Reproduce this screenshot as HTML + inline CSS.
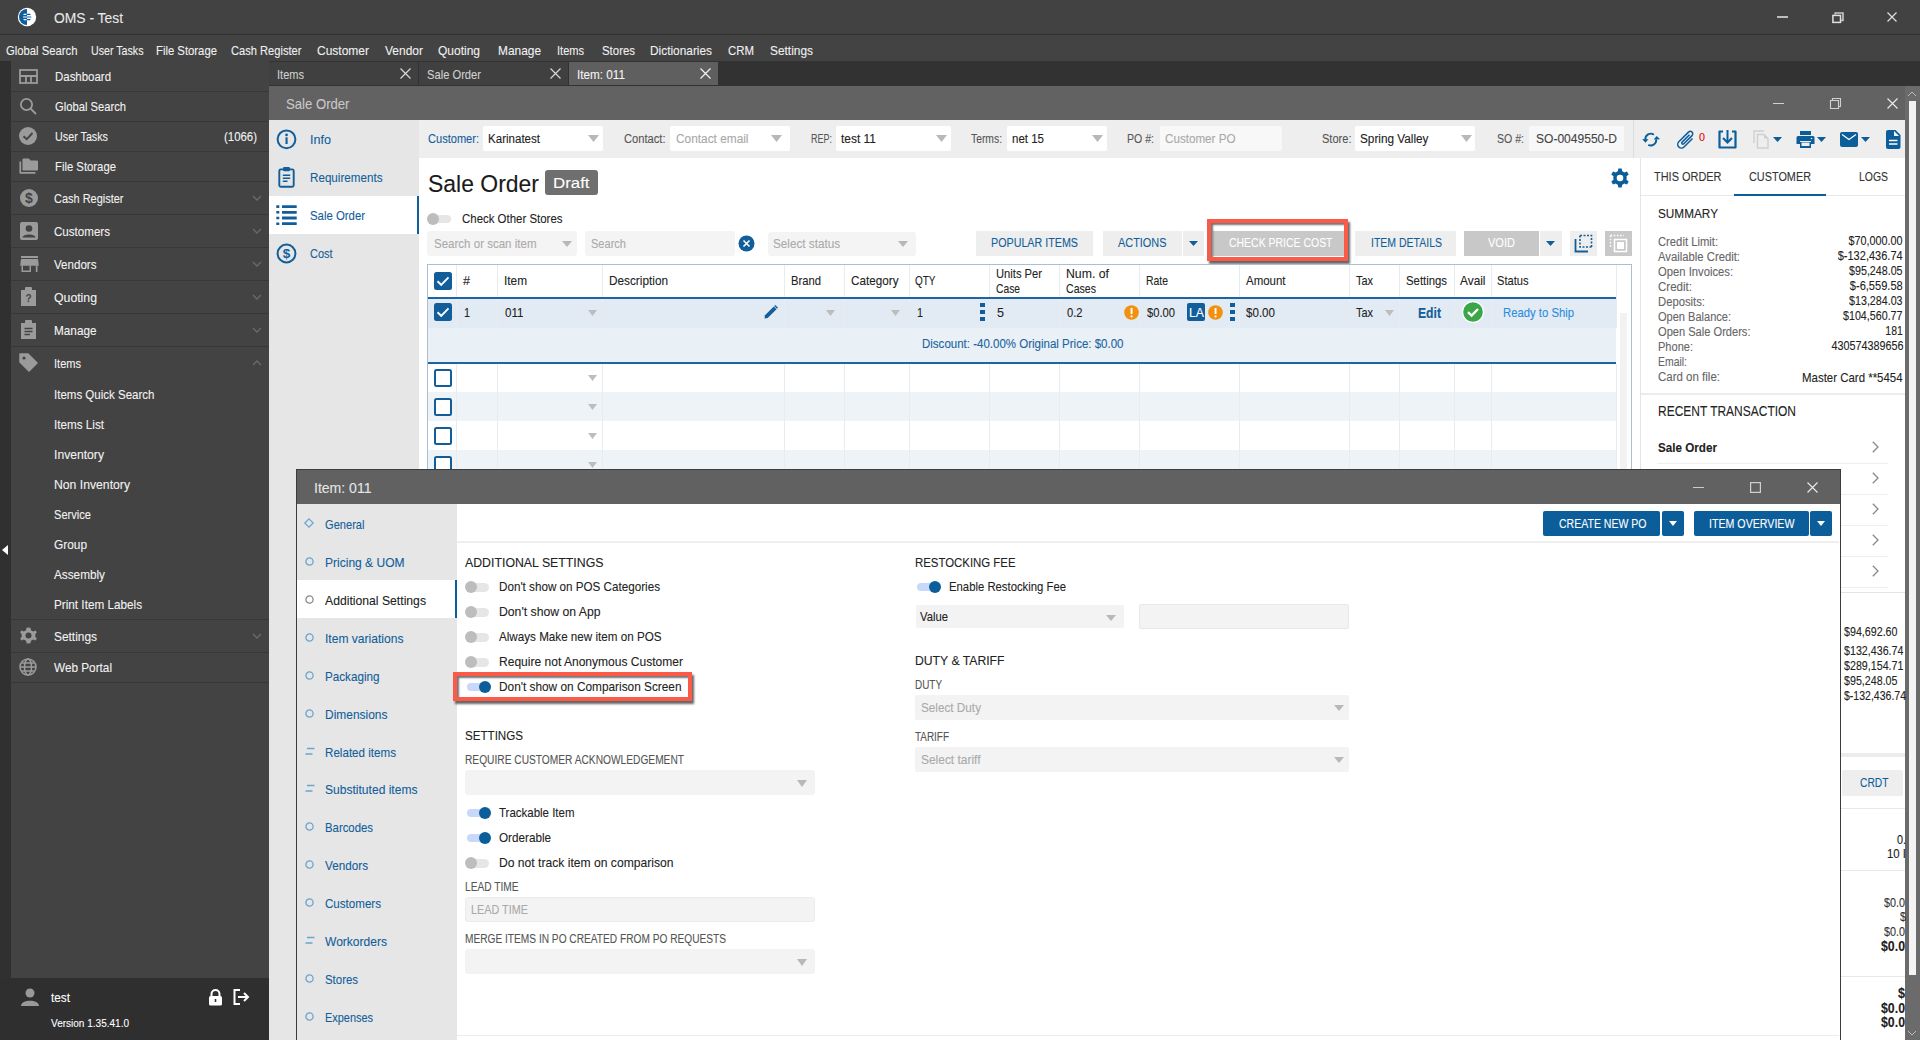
<!DOCTYPE html>
<html><head><meta charset="utf-8">
<style>
*{box-sizing:border-box;margin:0;padding:0}
html,body{width:1920px;height:1040px;overflow:hidden;background:#2f2f2f;font-family:"Liberation Sans",sans-serif;font-size:13px;color:#222}
.a{position:absolute}
.t{position:absolute;white-space:nowrap;line-height:1;-webkit-text-stroke:0.1px currentColor}
svg{position:absolute;overflow:visible}
</style></head><body>
<div class="a" style="left:0px;top:0px;width:1920px;height:34px;background:#424242;"></div>
<div class="a" style="left:0px;top:34px;width:1920px;height:1px;background:#303030;"></div>
<svg style="left:17px;top:7px" width="20" height="20"><circle cx="10" cy="10" r="9.2" fill="#fff"/><path d="M10 2A8 8 0 0 0 10 18Z" fill="#0a5f9c"/><path d="M7 7.4H10M6.5 10H10M7 12.6H10" stroke="#fff" stroke-width="1.2" stroke-linecap="round"/><path d="M10 7.4H13M10 10H13.8M10 12.6H13" stroke="#0a5f9c" stroke-width="1.2" stroke-linecap="round"/><path d="M6.5 10H13.8" stroke="#8db5d6" stroke-width="1.5" opacity="0.6"/></svg>
<div class="t" style="left:54px;top:10.73px;font-size:14.5px;color:#e8e8e8;transform:scaleX(0.9551);transform-origin:0 0;">OMS - Test</div>
<div class="a" style="left:1777px;top:16px;width:11px;height:2px;background:#bdbdbd;"></div>
<svg style="left:1832px;top:12px" width="12" height="11"><path d="M3.2 2.6V1H11V8.4H9.2" fill="none" stroke="#c8c8c8" stroke-width="1.6"/><rect x="0.9" y="3.4" width="7.6" height="7" fill="none" stroke="#e0e0e0" stroke-width="1.5"/></svg>
<svg style="left:1887px;top:12px" width="10" height="10"><path d="M0.5 0.5L9.5 9.5M9.5 0.5L0.5 9.5" stroke="#e0e0e0" stroke-width="1.2"/></svg>
<div class="a" style="left:0px;top:35px;width:1920px;height:26px;background:#434343;"></div>
<div class="t" style="left:6px;top:44.07px;font-size:13.5px;color:#f0f0f0;transform:scaleX(0.8358);transform-origin:0 0;">Global Search</div>
<div class="t" style="left:90.5px;top:44.07px;font-size:13.5px;color:#f0f0f0;transform:scaleX(0.7892);transform-origin:0 0;">User Tasks</div>
<div class="t" style="left:155.5px;top:44.07px;font-size:13.5px;color:#f0f0f0;transform:scaleX(0.8380);transform-origin:0 0;">File Storage</div>
<div class="t" style="left:230.5px;top:44.07px;font-size:13.5px;color:#f0f0f0;transform:scaleX(0.8242);transform-origin:0 0;">Cash Register</div>
<div class="t" style="left:317px;top:44.07px;font-size:13.5px;color:#f0f0f0;transform:scaleX(0.8886);transform-origin:0 0;">Customer</div>
<div class="t" style="left:385px;top:44.07px;font-size:13.5px;color:#f0f0f0;transform:scaleX(0.8881);transform-origin:0 0;">Vendor</div>
<div class="t" style="left:438px;top:44.07px;font-size:13.5px;color:#f0f0f0;transform:scaleX(0.8883);transform-origin:0 0;">Quoting</div>
<div class="t" style="left:498px;top:44.07px;font-size:13.5px;color:#f0f0f0;transform:scaleX(0.8814);transform-origin:0 0;">Manage</div>
<div class="t" style="left:557px;top:44.07px;font-size:13.5px;color:#f0f0f0;transform:scaleX(0.8180);transform-origin:0 0;">Items</div>
<div class="t" style="left:601.5px;top:44.07px;font-size:13.5px;color:#f0f0f0;transform:scaleX(0.8458);transform-origin:0 0;">Stores</div>
<div class="t" style="left:650px;top:44.07px;font-size:13.5px;color:#f0f0f0;transform:scaleX(0.8791);transform-origin:0 0;">Dictionaries</div>
<div class="t" style="left:728px;top:44.07px;font-size:13.5px;color:#f0f0f0;transform:scaleX(0.8457);transform-origin:0 0;">CRM</div>
<div class="t" style="left:770px;top:44.07px;font-size:13.5px;color:#f0f0f0;transform:scaleX(0.8815);transform-origin:0 0;">Settings</div>
<div class="a" style="left:0px;top:61px;width:11px;height:979px;background:#303030;"></div>
<div class="a" style="left:11px;top:61px;width:258px;height:917px;background:#434343;"></div>
<div class="a" style="left:0px;top:978px;width:269px;height:62px;background:#2f2f2f;"></div>
<svg style="left:2px;top:545px" width="6" height="10"><path d="M6 0V10L0 5Z" fill="#fff"/></svg>
<div class="a" style="left:11px;top:91px;width:258px;height:1px;background:#383838;"></div>
<div class="a" style="left:11px;top:121px;width:258px;height:1px;background:#383838;"></div>
<div class="a" style="left:11px;top:151px;width:258px;height:1px;background:#383838;"></div>
<div class="a" style="left:11px;top:181px;width:258px;height:1px;background:#383838;"></div>
<div class="a" style="left:11px;top:214px;width:258px;height:1px;background:#383838;"></div>
<div class="a" style="left:11px;top:247px;width:258px;height:1px;background:#383838;"></div>
<div class="a" style="left:11px;top:280px;width:258px;height:1px;background:#383838;"></div>
<div class="a" style="left:11px;top:313px;width:258px;height:1px;background:#383838;"></div>
<div class="a" style="left:11px;top:346px;width:258px;height:1px;background:#383838;"></div>
<div class="a" style="left:11px;top:619px;width:258px;height:1px;background:#383838;"></div>
<div class="a" style="left:11px;top:652px;width:258px;height:1px;background:#383838;"></div>
<div class="a" style="left:11px;top:682px;width:258px;height:1px;background:#383838;"></div>
<div class="t" style="left:54.5px;top:70.07px;font-size:13.5px;color:#f2f2f2;transform:scaleX(0.8479);transform-origin:0 0;">Dashboard</div>
<div class="t" style="left:54.5px;top:99.57px;font-size:13.5px;color:#f2f2f2;transform:scaleX(0.8299);transform-origin:0 0;">Global Search</div>
<div class="t" style="left:54.5px;top:129.57px;font-size:13.5px;color:#f2f2f2;transform:scaleX(0.7968);transform-origin:0 0;">User Tasks</div>
<div class="t" style="left:54.5px;top:159.57px;font-size:13.5px;color:#f2f2f2;transform:scaleX(0.8380);transform-origin:0 0;">File Storage</div>
<div class="t" style="left:53.5px;top:191.57px;font-size:13.5px;color:#f2f2f2;transform:scaleX(0.8125);transform-origin:0 0;">Cash Register</div>
<div class="t" style="left:53.5px;top:224.57px;font-size:13.5px;color:#f2f2f2;transform:scaleX(0.8580);transform-origin:0 0;">Customers</div>
<div class="t" style="left:53.5px;top:257.57px;font-size:13.5px;color:#f2f2f2;transform:scaleX(0.8579);transform-origin:0 0;">Vendors</div>
<div class="t" style="left:53.5px;top:290.57px;font-size:13.5px;color:#f2f2f2;transform:scaleX(0.9094);transform-origin:0 0;">Quoting</div>
<div class="t" style="left:53.5px;top:323.57px;font-size:13.5px;color:#f2f2f2;transform:scaleX(0.8711);transform-origin:0 0;">Manage</div>
<div class="t" style="left:53.5px;top:356.57px;font-size:13.5px;color:#f2f2f2;transform:scaleX(0.8180);transform-origin:0 0;">Items</div>
<div class="t" style="left:54px;top:387.57px;font-size:13.5px;color:#f2f2f2;transform:scaleX(0.8532);transform-origin:0 0;">Items Quick Search</div>
<div class="t" style="left:54px;top:417.57px;font-size:13.5px;color:#f2f2f2;transform:scaleX(0.8656);transform-origin:0 0;">Items List</div>
<div class="t" style="left:54px;top:447.57px;font-size:13.5px;color:#f2f2f2;transform:scaleX(0.9004);transform-origin:0 0;">Inventory</div>
<div class="t" style="left:54px;top:477.57px;font-size:13.5px;color:#f2f2f2;transform:scaleX(0.9043);transform-origin:0 0;">Non Inventory</div>
<div class="t" style="left:54px;top:507.57px;font-size:13.5px;color:#f2f2f2;transform:scaleX(0.8219);transform-origin:0 0;">Service</div>
<div class="t" style="left:54px;top:537.57px;font-size:13.5px;color:#f2f2f2;transform:scaleX(0.8795);transform-origin:0 0;">Group</div>
<div class="t" style="left:54px;top:567.57px;font-size:13.5px;color:#f2f2f2;transform:scaleX(0.8715);transform-origin:0 0;">Assembly</div>
<div class="t" style="left:54px;top:597.57px;font-size:13.5px;color:#f2f2f2;transform:scaleX(0.8687);transform-origin:0 0;">Print Item Labels</div>
<div class="t" style="left:53.5px;top:629.57px;font-size:13.5px;color:#f2f2f2;transform:scaleX(0.8815);transform-origin:0 0;">Settings</div>
<div class="t" style="left:54px;top:660.57px;font-size:13.5px;color:#f2f2f2;transform:scaleX(0.8717);transform-origin:0 0;">Web Portal</div>
<div class="t" style="right:1662.5px;top:129.57px;font-size:13.5px;color:#f2f2f2;transform:scaleX(0.8456);transform-origin:100% 0;">(1066)</div>
<svg style="left:252px;top:195px" width="10" height="6"><path d="M1 1L5 5L9 1" fill="none" stroke="#6a6a6a" stroke-width="1.3"/></svg>
<svg style="left:252px;top:228px" width="10" height="6"><path d="M1 1L5 5L9 1" fill="none" stroke="#6a6a6a" stroke-width="1.3"/></svg>
<svg style="left:252px;top:261px" width="10" height="6"><path d="M1 1L5 5L9 1" fill="none" stroke="#6a6a6a" stroke-width="1.3"/></svg>
<svg style="left:252px;top:294px" width="10" height="6"><path d="M1 1L5 5L9 1" fill="none" stroke="#6a6a6a" stroke-width="1.3"/></svg>
<svg style="left:252px;top:327px" width="10" height="6"><path d="M1 1L5 5L9 1" fill="none" stroke="#6a6a6a" stroke-width="1.3"/></svg>
<svg style="left:252px;top:360px" width="10" height="6"><path d="M1 5L5 1L9 5" fill="none" stroke="#6a6a6a" stroke-width="1.3"/></svg>
<svg style="left:252px;top:633px" width="10" height="6"><path d="M1 1L5 5L9 1" fill="none" stroke="#6a6a6a" stroke-width="1.3"/></svg>
<svg style="left:19px;top:69px" width="19" height="15"><rect x="1" y="1" width="17" height="13" fill="none" stroke="#9b9b9b" stroke-width="1.8"/><path d="M1 7H18M7 7V14M12 7V14" stroke="#9b9b9b" stroke-width="1.8"/></svg>
<svg style="left:19px;top:97px" width="18" height="18"><circle cx="7.5" cy="7.5" r="5.6" fill="none" stroke="#9b9b9b" stroke-width="1.8"/><path d="M11.5 11.5L17 17" stroke="#9b9b9b" stroke-width="1.8"/></svg>
<svg style="left:19px;top:127px" width="18" height="18"><circle cx="9" cy="9" r="9" fill="#9b9b9b"/><path d="M4.5 9.2L7.7 12.2L13.5 6" fill="none" stroke="#434343" stroke-width="1.9"/></svg>
<svg style="left:19px;top:158px" width="20" height="17"><path d="M4 1H9.8L11.5 3H18.5V12H4Z" fill="#9b9b9b" stroke="#9b9b9b" stroke-width="1" stroke-linejoin="round"/><path d="M1.3 3.5V14.8H16.5" fill="none" stroke="#9b9b9b" stroke-width="1.7" stroke-linejoin="round"/></svg>
<svg style="left:20px;top:189px" width="18" height="18"><circle cx="9" cy="9" r="9" fill="#9b9b9b"/><text x="9" y="14" text-anchor="middle" font-family="Liberation Sans" font-size="14" font-weight="bold" fill="#434343">$</text></svg>
<svg style="left:20px;top:222px" width="18" height="18"><rect x="0" y="0" width="18" height="18" rx="2" fill="#9b9b9b"/><circle cx="9" cy="6.5" r="3.3" fill="#434343"/><path d="M2.5 15.5C3 11.5 15 11.5 15.5 15.5Z" fill="#434343"/></svg>
<svg style="left:19px;top:255px" width="20" height="18"><rect x="2" y="1" width="17" height="2" fill="#9b9b9b"/><path d="M2 4H19L19.8 10.8H1.2Z" fill="#9b9b9b"/><path d="M2.5 10.5H4V15.5H10.5V10.5H12V17H2.5Z" fill="#9b9b9b"/><rect x="16.8" y="10.5" width="1.7" height="6.5" fill="#9b9b9b"/></svg>
<svg style="left:20px;top:287px" width="17" height="19"><path d="M1 3H16V19H1Z" fill="#9b9b9b"/><rect x="5" y="0" width="7" height="4" rx="1" fill="#9b9b9b"/><text x="8.5" y="15" text-anchor="middle" font-family="Liberation Sans" font-size="10" font-weight="bold" fill="#434343">?</text></svg>
<svg style="left:20px;top:320px" width="17" height="19"><path d="M1 3H16V19H1Z" fill="#9b9b9b"/><rect x="5" y="0" width="7" height="4" rx="1" fill="#9b9b9b"/><path d="M4.5 8.5H12.5M4.5 11.5H12.5M4.5 14.5H10" stroke="#434343" stroke-width="1.5"/></svg>
<svg style="left:19px;top:353px" width="19" height="19"><path d="M1 1H9L18 10L10 18L1 9Z" fill="#9b9b9b" stroke="#9b9b9b" stroke-linejoin="round" stroke-width="1.5"/><circle cx="5" cy="5" r="1.6" fill="#434343"/></svg>
<svg style="left:19px;top:626px" width="19" height="19"><path d="M9.5 1.5L11.4 1.8L12 4.2L14.2 5.4L16.5 4.6L17.8 6.3L16.3 8.3V10.7L17.8 12.7L16.5 14.4L14.2 13.6L12 14.8L11.4 17.2L9.5 17.5L7.6 17.2L7 14.8L4.8 13.6L2.5 14.4L1.2 12.7L2.7 10.7V8.3L1.2 6.3L2.5 4.6L4.8 5.4L7 4.2L7.6 1.8Z" fill="#9b9b9b"/><circle cx="9.5" cy="9.5" r="3" fill="#434343"/></svg>
<svg style="left:19px;top:658px" width="18" height="18"><circle cx="9" cy="9" r="8" fill="none" stroke="#9b9b9b" stroke-width="1.5"/><ellipse cx="9" cy="9" rx="3.5" ry="8" fill="none" stroke="#9b9b9b" stroke-width="1.5"/><path d="M1 9H17M2.5 5H15.5M2.5 13H15.5" stroke="#9b9b9b" stroke-width="1.4"/></svg>
<svg style="left:21px;top:988px" width="18" height="18"><circle cx="9" cy="5" r="4.5" fill="#999"/><path d="M0 18C0 11 18 11 18 18Z" fill="#999"/></svg>
<div class="t" style="left:51px;top:990.57px;font-size:13.5px;color:#fff;transform:scaleX(0.8732);transform-origin:0 0;">test</div>
<div class="t" style="left:51px;top:1018.27px;font-size:11.5px;color:#fff;transform:scaleX(0.8714);transform-origin:0 0;">Version 1.35.41.0</div>
<svg style="left:208px;top:989px" width="15" height="17"><path d="M3.5 7V5A4 4 0 0 1 11.5 5V7" fill="none" stroke="#fff" stroke-width="2"/><rect x="1" y="7" width="13" height="9.5" rx="1.5" fill="#fff"/><rect x="6.7" y="10" width="1.6" height="3" fill="#2f2f2f"/></svg>
<svg style="left:233px;top:989px" width="18" height="16"><path d="M7 1H1.5V15H7" fill="none" stroke="#fff" stroke-width="2"/><path d="M5 8H15M11 4L15 8L11 12" fill="none" stroke="#fff" stroke-width="2"/></svg>
<div class="a" style="left:269px;top:61px;width:1651px;height:25px;background:#323232;"></div>
<div class="a" style="left:269px;top:62px;width:149px;height:23px;background:#404040;"></div>
<div class="a" style="left:419px;top:62px;width:149px;height:23px;background:#404040;"></div>
<div class="a" style="left:569px;top:62px;width:149px;height:23px;background:#5f5f5f;"></div>
<div class="t" style="left:277px;top:67.57px;font-size:13.5px;color:#d0d0d0;transform:scaleX(0.8180);transform-origin:0 0;">Items</div>
<div class="t" style="left:427px;top:67.57px;font-size:13.5px;color:#d0d0d0;transform:scaleX(0.8272);transform-origin:0 0;">Sale Order</div>
<div class="t" style="left:577px;top:67.57px;font-size:13.5px;color:#f4f4f4;transform:scaleX(0.8683);transform-origin:0 0;">Item: 011</div>
<svg style="left:400px;top:68px" width="11" height="11"><path d="M0.5 0.5L10.5 10.5M10.5 0.5L0.5 10.5" stroke="#d8d8d8" stroke-width="1.2"/></svg>
<svg style="left:550px;top:68px" width="11" height="11"><path d="M0.5 0.5L10.5 10.5M10.5 0.5L0.5 10.5" stroke="#d8d8d8" stroke-width="1.2"/></svg>
<svg style="left:700px;top:68px" width="11" height="11"><path d="M0.5 0.5L10.5 10.5M10.5 0.5L0.5 10.5" stroke="#f4f4f4" stroke-width="1.2"/></svg>
<div class="a" style="left:269px;top:86px;width:1636px;height:34px;background:#626262;"></div>
<div class="a" style="left:1905px;top:86px;width:15px;height:954px;background:#6b6b6b;"></div>
<div class="a" style="left:1909px;top:101px;width:7px;height:874px;background:#f4f4f4;"></div>
<svg style="left:1907px;top:91px" width="10" height="6"><path d="M1 5L5 1L9 5" fill="none" stroke="#bbb" stroke-width="1"/></svg>
<svg style="left:1907px;top:1030px" width="10" height="6"><path d="M1 1L5 5L9 1" fill="none" stroke="#bbb" stroke-width="1"/></svg>
<div class="t" style="left:285.5px;top:96.73px;font-size:14.5px;color:#c8c8c8;transform:scaleX(0.9056);transform-origin:0 0;">Sale Order</div>
<div class="a" style="left:1773px;top:103px;width:11px;height:1px;background:#d0d0d0;"></div>
<svg style="left:1830px;top:98px" width="11" height="11"><path d="M2.5 2.5V0.5H10.5V8.5H8.5M0.5 2.5H8.5V10.5H0.5Z" fill="none" stroke="#d0d0d0" stroke-width="1.1"/></svg>
<svg style="left:1887px;top:98px" width="11" height="11"><path d="M0.5 0.5L10.5 10.5M10.5 0.5L0.5 10.5" stroke="#e8e8e8" stroke-width="1.2"/></svg>
<div class="a" style="left:269px;top:120px;width:150px;height:920px;background:#e6e6e6;"></div>
<div class="a" style="left:269px;top:196px;width:150px;height:38px;background:#fff;"></div>
<div class="a" style="left:417px;top:196px;width:2px;height:38px;background:#115e9a;"></div>
<div class="t" style="left:309.5px;top:132.57px;font-size:13.5px;color:#115e9a;transform:scaleX(0.9326);transform-origin:0 0;">Info</div>
<div class="t" style="left:309.5px;top:170.57px;font-size:13.5px;color:#115e9a;transform:scaleX(0.8627);transform-origin:0 0;">Requirements</div>
<div class="t" style="left:309.5px;top:208.57px;font-size:13.5px;color:#115e9a;transform:scaleX(0.8425);transform-origin:0 0;">Sale Order</div>
<div class="t" style="left:309.5px;top:246.57px;font-size:13.5px;color:#115e9a;transform:scaleX(0.8106);transform-origin:0 0;">Cost</div>
<svg style="left:276px;top:129px" width="21" height="21"><circle cx="10.5" cy="10.3" r="8.9" fill="none" stroke="#115e9a" stroke-width="2"/><rect x="9.5" y="8.3" width="2.1" height="6.7" fill="#115e9a"/><circle cx="10.55" cy="5.9" r="1.35" fill="#115e9a"/></svg>
<svg style="left:277px;top:166px" width="19" height="22"><rect x="2.3" y="3.4" width="14.4" height="17.3" rx="1.5" fill="none" stroke="#115e9a" stroke-width="1.9"/><rect x="6" y="1" width="7" height="4.2" rx="1.2" fill="#115e9a"/><path d="M5.8 9.3H13.2M5.8 12.3H13.2M5.8 15.3H10.5" stroke="#115e9a" stroke-width="1.6"/></svg>
<svg style="left:276px;top:204px" width="22" height="22"><path d="M0.3 2.6H3.3M0.3 8.3H3.3M0.3 14H3.3M0.3 19.7H3.3" stroke="#115e9a" stroke-width="2.6"/><path d="M6 2.6H20.7M6 8.3H20.7M6 14H20.7M6 19.7H20.7" stroke="#115e9a" stroke-width="2.8"/></svg>
<svg style="left:276px;top:243px" width="21" height="21"><circle cx="10.5" cy="10.5" r="8.9" fill="none" stroke="#115e9a" stroke-width="2"/><text x="10.5" y="15.3" text-anchor="middle" font-family="Liberation Sans" font-size="13.5" font-weight="bold" fill="#115e9a">$</text></svg>
<div class="a" style="left:419px;top:120px;width:1486px;height:38px;background:#eeeeee;"></div>
<div class="a" style="left:1633px;top:120px;width:1px;height:38px;background:#dedede;"></div>
<div class="t" style="left:427.5px;top:133.42px;font-size:12.5px;color:#115e9a;transform:scaleX(0.8846);transform-origin:0 0;">Customer:</div>
<div class="a" style="left:483px;top:126px;width:120px;height:25px;background:#fff;border-radius:2px"></div>
<div class="t" style="left:487.5px;top:133.42px;font-size:12.5px;color:#222;transform:scaleX(0.9239);transform-origin:0 0;">Karinatest</div>
<div class="t" style="left:623.5px;top:133.42px;font-size:12.5px;color:#555;transform:scaleX(0.8915);transform-origin:0 0;">Contact:</div>
<div class="a" style="left:670px;top:126px;width:120px;height:25px;background:#fff;border-radius:2px"></div>
<div class="t" style="left:675.5px;top:133.42px;font-size:12.5px;color:#a8a8a8;transform:scaleX(0.9487);transform-origin:0 0;">Contact email</div>
<div class="t" style="left:810.5px;top:133.42px;font-size:12.5px;color:#555;transform:scaleX(0.7198);transform-origin:0 0;">REP:</div>
<div class="a" style="left:836px;top:126px;width:115px;height:25px;background:#fff;border-radius:2px"></div>
<div class="t" style="left:840.5px;top:133.42px;font-size:12.5px;color:#222;transform:scaleX(0.9564);transform-origin:0 0;">test 11</div>
<div class="t" style="left:971px;top:133.42px;font-size:12.5px;color:#555;transform:scaleX(0.8266);transform-origin:0 0;">Terms:</div>
<div class="a" style="left:1007px;top:126px;width:100px;height:25px;background:#fff;border-radius:2px"></div>
<div class="t" style="left:1011.5px;top:133.42px;font-size:12.5px;color:#222;transform:scaleX(0.9208);transform-origin:0 0;">net 15</div>
<div class="t" style="left:1127px;top:133.42px;font-size:12.5px;color:#555;transform:scaleX(0.8449);transform-origin:0 0;">PO #:</div>
<div class="a" style="left:1160px;top:126px;width:122px;height:25px;background:#f8f8f8;border-radius:2px"></div>
<div class="t" style="left:1164.5px;top:133.42px;font-size:12.5px;color:#a8a8a8;transform:scaleX(0.9311);transform-origin:0 0;">Customer PO</div>
<div class="t" style="left:1322px;top:133.42px;font-size:12.5px;color:#555;transform:scaleX(0.8845);transform-origin:0 0;">Store:</div>
<div class="a" style="left:1355px;top:126px;width:120px;height:25px;background:#fff;border-radius:2px"></div>
<div class="t" style="left:1360px;top:133.42px;font-size:12.5px;color:#222;transform:scaleX(0.9419);transform-origin:0 0;">Spring Valley</div>
<div class="t" style="left:1496.5px;top:133.42px;font-size:12.5px;color:#555;transform:scaleX(0.8449);transform-origin:0 0;">SO #:</div>
<div class="a" style="left:1529px;top:126px;width:95px;height:25px;background:#f8f8f8;border-radius:2px"></div>
<div class="t" style="left:1536px;top:133.42px;font-size:12.5px;color:#444;transform:scaleX(0.9634);transform-origin:0 0;">SO-0049550-D</div>
<svg style="left:588px;top:135px" width="11" height="7"><path d="M0 0H11L5.5 7Z" fill="#b8b8b8"/></svg>
<svg style="left:771px;top:135px" width="11" height="7"><path d="M0 0H11L5.5 7Z" fill="#b8b8b8"/></svg>
<svg style="left:936px;top:135px" width="11" height="7"><path d="M0 0H11L5.5 7Z" fill="#b8b8b8"/></svg>
<svg style="left:1092px;top:135px" width="11" height="7"><path d="M0 0H11L5.5 7Z" fill="#b8b8b8"/></svg>
<svg style="left:1461px;top:135px" width="11" height="7"><path d="M0 0H11L5.5 7Z" fill="#b8b8b8"/></svg>
<svg style="left:1642px;top:132px" width="18" height="15" viewBox="0 0 18 15"><path d="M3.4 7.6A5.4 5.4 0 0 1 11.9 2.7" fill="none" stroke="#0b5e9a" stroke-width="1.9"/><path d="M6.3 12.8A5.4 5.4 0 0 0 14.2 7.4" fill="none" stroke="#0b5e9a" stroke-width="1.9"/><path d="M0.2 6.9L6.5 7.3L3.4 10.8Z" fill="#0b5e9a"/><path d="M11.6 7.5L18 7.2L14.7 4Z" fill="#0b5e9a"/></svg>
<svg style="left:1677px;top:130px" width="17" height="19"><path d="M15.5 8.5L7 17A3.6 3.6 0 0 1 1.8 11.8L11.5 2.1A2.4 2.4 0 0 1 15 5.6L6.8 13.8A1.2 1.2 0 0 1 5.1 12.1L12.5 4.7" fill="none" stroke="#0b5e9a" stroke-width="1.5"/></svg>
<div class="t" style="left:1699px;top:132.11px;font-size:10.5px;color:#e00;transform:scaleX(1.0274);transform-origin:0 0;">0</div>
<svg style="left:1718px;top:130px" width="19" height="19"><path d="M5 1.5H1.5V17.5H17.5V1.5H14" fill="none" stroke="#0b5e9a" stroke-width="2.2" stroke-linejoin="round"/><path d="M9.5 0V12" stroke="#0b5e9a" stroke-width="2"/><path d="M5 8L9.5 12.5L14 8" fill="none" stroke="#0b5e9a" stroke-width="2"/></svg>
<svg style="left:1753px;top:130px" width="16" height="19"><path d="M1 13V1H11" fill="none" stroke="#cfcfcf" stroke-width="1.3"/><path d="M4.5 4.5H11L15 8.5V18H4.5Z" fill="none" stroke="#cfcfcf" stroke-width="1.4"/><path d="M11 4.5V8.5H15Z" fill="#cfcfcf"/></svg>
<svg style="left:1773px;top:137px" width="9" height="5"><path d="M0 0H9L4.5 5Z" fill="#0b5e9a"/></svg>
<svg style="left:1796px;top:131px" width="19" height="17"><rect x="4" y="0" width="11" height="4" fill="#0b5e9a"/><path d="M2 5H17A1.5 1.5 0 0 1 18.5 6.5V13H15V10H4V13H0.5V6.5A1.5 1.5 0 0 1 2 5Z" fill="#0b5e9a"/><path d="M4 11H15V17H4Z" fill="#0b5e9a"/><rect x="5.5" y="11.5" width="8" height="3.5" fill="#eee"/><circle cx="15.5" cy="7.5" r="0.8" fill="#eee"/></svg>
<svg style="left:1817px;top:137px" width="9" height="5"><path d="M0 0H9L4.5 5Z" fill="#0b5e9a"/></svg>
<svg style="left:1840px;top:132px" width="18" height="15"><rect x="0" y="0" width="18" height="15" rx="2" fill="#0b5e9a"/><path d="M2 2.5L9 7.5L16 2.5" fill="none" stroke="#fff" stroke-width="1.2"/></svg>
<svg style="left:1861px;top:137px" width="9" height="5"><path d="M0 0H9L4.5 5Z" fill="#0b5e9a"/></svg>
<svg style="left:1886px;top:130px" width="15" height="19"><path d="M2 0H9.5L14.5 5V17A2 2 0 0 1 12.5 19H2A2 2 0 0 1 0 17V2A2 2 0 0 1 2 0Z" fill="#0b5e9a"/><path d="M8 1V6H13Z" fill="#fff"/><path d="M3 10.5H11.5M3 14H11.5" stroke="#fff" stroke-width="1.3"/></svg>
<div class="a" style="left:419px;top:158px;width:1221px;height:882px;background:#fff;"></div>
<div class="a" style="left:1640px;top:158px;width:265px;height:882px;background:#fff;border-left:1px solid #e4e4e4"></div>
<div class="t" style="left:428px;top:172.26px;font-size:24.5px;color:#1a1a1a;transform:scaleX(0.9369);transform-origin:0 0;">Sale Order</div>
<div class="a" style="left:545px;top:170px;width:53px;height:25px;background:#6f6f6f;border-radius:3px"></div>
<div class="t" style="left:553px;top:174.88px;font-size:15.5px;color:#fff;transform:scaleX(1.0867);transform-origin:0 0;">Draft</div>
<svg style="left:1610px;top:168px" width="20" height="20" viewBox="0 0 20 20"><path d="M8.3 0.5H11.7L12.2 3.3A7 7 0 0 1 14.3 4.5L17 3.5L18.7 6.4L16.5 8.3A7 7 0 0 1 16.5 11.7L18.7 13.6L17 16.5L14.3 15.5A7 7 0 0 1 12.2 16.7L11.7 19.5H8.3L7.8 16.7A7 7 0 0 1 5.7 15.5L3 16.5L1.3 13.6L3.5 11.7A7 7 0 0 1 3.5 8.3L1.3 6.4L3 3.5L5.7 4.5A7 7 0 0 1 7.8 3.3Z" fill="#0b5e9a"/><circle cx="10" cy="10" r="3.3" fill="#fff"/></svg>
<div class="a" style="left:428px;top:214.5px;width:23px;height:8px;background:#e6e6e6;border-radius:4px"></div>
<div class="a" style="left:427px;top:213px;width:12px;height:12px;background:#bdbdbd;border-radius:50%"></div>
<div class="t" style="left:461.5px;top:212.07px;font-size:13.5px;color:#222;transform:scaleX(0.8478);transform-origin:0 0;">Check Other Stores</div>
<div class="a" style="left:427px;top:231px;width:150px;height:25px;background:#f4f4f4;border-radius:3px"></div>
<div class="t" style="left:433.5px;top:236.57px;font-size:13.5px;color:#aaa;transform:scaleX(0.8538);transform-origin:0 0;">Search or scan item</div>
<svg style="left:562px;top:241px" width="10" height="6"><path d="M0 0H10L5.0 6Z" fill="#b8b8b8"/></svg>
<div class="a" style="left:585px;top:231px;width:150px;height:25px;background:#f4f4f4;border-radius:3px"></div>
<div class="t" style="left:591px;top:236.57px;font-size:13.5px;color:#aaa;transform:scaleX(0.8182);transform-origin:0 0;">Search</div>
<svg style="left:738px;top:235px" width="17" height="17"><circle cx="8.5" cy="8.5" r="8" fill="#115e9a"/><path d="M5.5 5.5L11.5 11.5M11.5 5.5L5.5 11.5" stroke="#fff" stroke-width="1.6"/></svg>
<div class="a" style="left:768px;top:232px;width:148px;height:24px;background:#f4f4f4;border-radius:3px"></div>
<div class="t" style="left:773px;top:236.57px;font-size:13.5px;color:#aaa;transform:scaleX(0.8669);transform-origin:0 0;">Select status</div>
<svg style="left:898px;top:241px" width="10" height="6"><path d="M0 0H10L5.0 6Z" fill="#b8b8b8"/></svg>
<div class="a" style="left:976px;top:231px;width:117px;height:25px;background:#eeeeee;"></div>
<div class="t" style="left:991px;top:236.92px;font-size:12.5px;color:#115e9a;transform:scaleX(0.8579);transform-origin:0 0;">POPULAR ITEMS</div>
<div class="a" style="left:1103px;top:231px;width:79px;height:25px;background:#eeeeee;"></div>
<div class="t" style="left:1118px;top:236.92px;font-size:12.5px;color:#115e9a;transform:scaleX(0.8729);transform-origin:0 0;">ACTIONS</div>
<div class="a" style="left:1183px;top:231px;width:21px;height:25px;background:#eeeeee;"></div>
<svg style="left:1189px;top:241px" width="9" height="5"><path d="M0 0H9L4.5 5Z" fill="#115e9a"/></svg>
<div class="a" style="left:1213px;top:231px;width:131px;height:25px;background:#c8c8c8;"></div>
<div class="t" style="left:1228.5px;top:236.92px;font-size:12.5px;color:#fff;transform:scaleX(0.8372);transform-origin:0 0;">CHECK PRICE COST</div>
<div class="a" style="left:1207px;top:219px;width:141px;height:42px;background:transparent;border:4px solid #fb5a49;box-shadow:2px 3px 2px rgba(0,0,0,0.6), inset 2px 2px 2px rgba(0,0,0,0.55)"></div>
<div class="a" style="left:1355px;top:231px;width:101px;height:25px;background:#eeeeee;"></div>
<div class="t" style="left:1370.5px;top:236.92px;font-size:12.5px;color:#115e9a;transform:scaleX(0.8402);transform-origin:0 0;">ITEM DETAILS</div>
<div class="a" style="left:1464px;top:231px;width:75px;height:25px;background:#c8c8c8;"></div>
<div class="t" style="left:1488px;top:236.92px;font-size:12.5px;color:#fff;transform:scaleX(0.8835);transform-origin:0 0;">VOID</div>
<div class="a" style="left:1540px;top:231px;width:22px;height:25px;background:#eeeeee;"></div>
<svg style="left:1546px;top:241px" width="9" height="5"><path d="M0 0H9L4.5 5Z" fill="#115e9a"/></svg>
<div class="a" style="left:1570px;top:231px;width:27px;height:25px;background:#eeeeee;"></div>
<svg style="left:1574px;top:234px" width="19" height="19"><path d="M6 1.5H17.5V13" fill="none" stroke="#115e9a" stroke-width="1.6" stroke-dasharray="2 1.5"/><path d="M6 1.5V13H17.5" fill="none" stroke="#115e9a" stroke-width="1.6" stroke-dasharray="2 1.5"/><path d="M1.5 5V17.5H14" fill="none" stroke="#115e9a" stroke-width="1.8"/></svg>
<div class="a" style="left:1605px;top:231px;width:27px;height:25px;background:#c8c8c8;"></div>
<svg style="left:1609px;top:234px" width="19" height="19"><path d="M1.5 1.5H15M1.5 1.5V13" fill="none" stroke="#fff" stroke-width="1.4" stroke-dasharray="1.6 1.6"/><rect x="5.5" y="5.5" width="12" height="12" fill="none" stroke="#fff" stroke-width="1.5"/><rect x="8" y="8" width="7" height="7" fill="#fff"/></svg>
<div class="a" style="left:427px;top:264px;width:1205px;height:776px;background:#fff;border-left:1px solid #a9c0d3;border-top:1px solid #a9c0d3;border-right:1px solid #a9c0d3"></div>
<div class="a" style="left:428px;top:298px;width:1188px;height:30px;background:#e2ebf3;"></div>
<div class="a" style="left:428px;top:328px;width:1188px;height:35px;background:#eaf1f6;"></div>
<div class="a" style="left:428px;top:392px;width:1188px;height:29px;background:#edf3f7;"></div>
<div class="a" style="left:428px;top:450px;width:1188px;height:29px;background:#edf3f7;"></div>
<div class="a" style="left:456px;top:265px;width:1px;height:63px;background:#e9ecef;"></div>
<div class="a" style="left:456px;top:364px;width:1px;height:110px;background:#e9ecef;"></div>
<div class="a" style="left:497px;top:265px;width:1px;height:63px;background:#e9ecef;"></div>
<div class="a" style="left:497px;top:364px;width:1px;height:110px;background:#e9ecef;"></div>
<div class="a" style="left:602px;top:265px;width:1px;height:63px;background:#e9ecef;"></div>
<div class="a" style="left:602px;top:364px;width:1px;height:110px;background:#e9ecef;"></div>
<div class="a" style="left:784px;top:265px;width:1px;height:63px;background:#e9ecef;"></div>
<div class="a" style="left:784px;top:364px;width:1px;height:110px;background:#e9ecef;"></div>
<div class="a" style="left:844px;top:265px;width:1px;height:63px;background:#e9ecef;"></div>
<div class="a" style="left:844px;top:364px;width:1px;height:110px;background:#e9ecef;"></div>
<div class="a" style="left:909px;top:265px;width:1px;height:63px;background:#e9ecef;"></div>
<div class="a" style="left:909px;top:364px;width:1px;height:110px;background:#e9ecef;"></div>
<div class="a" style="left:989px;top:265px;width:1px;height:63px;background:#e9ecef;"></div>
<div class="a" style="left:989px;top:364px;width:1px;height:110px;background:#e9ecef;"></div>
<div class="a" style="left:1059px;top:265px;width:1px;height:63px;background:#e9ecef;"></div>
<div class="a" style="left:1059px;top:364px;width:1px;height:110px;background:#e9ecef;"></div>
<div class="a" style="left:1139px;top:265px;width:1px;height:63px;background:#e9ecef;"></div>
<div class="a" style="left:1139px;top:364px;width:1px;height:110px;background:#e9ecef;"></div>
<div class="a" style="left:1239px;top:265px;width:1px;height:63px;background:#e9ecef;"></div>
<div class="a" style="left:1239px;top:364px;width:1px;height:110px;background:#e9ecef;"></div>
<div class="a" style="left:1349px;top:265px;width:1px;height:63px;background:#e9ecef;"></div>
<div class="a" style="left:1349px;top:364px;width:1px;height:110px;background:#e9ecef;"></div>
<div class="a" style="left:1399px;top:265px;width:1px;height:63px;background:#e9ecef;"></div>
<div class="a" style="left:1399px;top:364px;width:1px;height:110px;background:#e9ecef;"></div>
<div class="a" style="left:1454px;top:265px;width:1px;height:63px;background:#e9ecef;"></div>
<div class="a" style="left:1454px;top:364px;width:1px;height:110px;background:#e9ecef;"></div>
<div class="a" style="left:1491px;top:265px;width:1px;height:63px;background:#e9ecef;"></div>
<div class="a" style="left:1491px;top:364px;width:1px;height:110px;background:#e9ecef;"></div>
<div class="a" style="left:1616px;top:265px;width:1px;height:63px;background:#e9ecef;"></div>
<div class="a" style="left:1616px;top:364px;width:1px;height:110px;background:#e9ecef;"></div>
<div class="a" style="left:428px;top:297px;width:1188px;height:2px;background:#1c65a0;"></div>
<div class="a" style="left:428px;top:362px;width:1188px;height:2px;background:#1c65a0;"></div>
<div class="a" style="left:1617px;top:298px;width:14px;height:180px;background:#fff;"></div>
<div class="a" style="left:1620px;top:313px;width:7px;height:160px;background:#f2f2f2;"></div>
<svg style="left:434px;top:272px" width="18" height="18"><rect width="18" height="18" rx="2.5" fill="#115e9a"/><path d="M3.5 9.3L7.2 12.8L14.5 5.3" fill="none" stroke="#fff" stroke-width="1.9"/></svg>
<svg style="left:434px;top:303px" width="18" height="18"><rect width="18" height="18" rx="2.5" fill="#115e9a"/><path d="M3.5 9.3L7.2 12.8L14.5 5.3" fill="none" stroke="#fff" stroke-width="1.9"/></svg>
<svg style="left:434px;top:369px" width="18" height="18"><rect x="1" y="1" width="16" height="16" rx="1.5" fill="#fff" stroke="#115e9a" stroke-width="2"/></svg>
<svg style="left:434px;top:398px" width="18" height="18"><rect x="1" y="1" width="16" height="16" rx="1.5" fill="#fff" stroke="#115e9a" stroke-width="2"/></svg>
<svg style="left:434px;top:427px" width="18" height="18"><rect x="1" y="1" width="16" height="16" rx="1.5" fill="#fff" stroke="#115e9a" stroke-width="2"/></svg>
<svg style="left:434px;top:456px" width="18" height="18"><rect x="1" y="1" width="16" height="16" rx="1.5" fill="#fff" stroke="#115e9a" stroke-width="2"/></svg>
<div class="t" style="left:463px;top:273.57px;font-size:13.5px;color:#222;transform:scaleX(0.9323);transform-origin:0 0;">#</div>
<div class="t" style="left:503.5px;top:273.57px;font-size:13.5px;color:#222;transform:scaleX(0.8760);transform-origin:0 0;">Item</div>
<div class="t" style="left:608.5px;top:273.57px;font-size:13.5px;color:#222;transform:scaleX(0.8737);transform-origin:0 0;">Description</div>
<div class="t" style="left:790.5px;top:273.57px;font-size:13.5px;color:#222;transform:scaleX(0.8327);transform-origin:0 0;">Brand</div>
<div class="t" style="left:850.5px;top:273.57px;font-size:13.5px;color:#222;transform:scaleX(0.8671);transform-origin:0 0;">Category</div>
<div class="t" style="left:915px;top:273.57px;font-size:13.5px;color:#222;transform:scaleX(0.7387);transform-origin:0 0;">QTY</div>
<div class="t" style="left:1145.5px;top:273.57px;font-size:13.5px;color:#222;transform:scaleX(0.7715);transform-origin:0 0;">Rate</div>
<div class="t" style="left:1245.5px;top:273.57px;font-size:13.5px;color:#222;transform:scaleX(0.8490);transform-origin:0 0;">Amount</div>
<div class="t" style="left:1355.5px;top:273.57px;font-size:13.5px;color:#222;transform:scaleX(0.8092);transform-origin:0 0;">Tax</div>
<div class="t" style="left:1405.5px;top:273.57px;font-size:13.5px;color:#222;transform:scaleX(0.8405);transform-origin:0 0;">Settings</div>
<div class="t" style="left:1460px;top:273.57px;font-size:13.5px;color:#222;transform:scaleX(0.8787);transform-origin:0 0;">Avail</div>
<div class="t" style="left:1497px;top:273.57px;font-size:13.5px;color:#222;transform:scaleX(0.8230);transform-origin:0 0;">Status</div>
<div class="t" style="left:995.5px;top:267.07px;font-size:13.5px;color:#222;transform:scaleX(0.8286);transform-origin:0 0;">Units Per</div>
<div class="t" style="left:995.5px;top:281.57px;font-size:13.5px;color:#222;transform:scaleX(0.7615);transform-origin:0 0;">Case</div>
<div class="t" style="left:1065.5px;top:267.07px;font-size:13.5px;color:#222;transform:scaleX(0.9098);transform-origin:0 0;">Num. of</div>
<div class="t" style="left:1065.5px;top:281.57px;font-size:13.5px;color:#222;transform:scaleX(0.7840);transform-origin:0 0;">Cases</div>
<div class="t" style="left:463.5px;top:306.07px;font-size:13.5px;color:#222;transform:scaleX(0.7991);transform-origin:0 0;">1</div>
<div class="t" style="left:504.5px;top:306.07px;font-size:13.5px;color:#222;transform:scaleX(0.8595);transform-origin:0 0;">011</div>
<div class="t" style="left:917px;top:306.07px;font-size:13.5px;color:#222;transform:scaleX(0.7991);transform-origin:0 0;">1</div>
<div class="t" style="left:997px;top:306.07px;font-size:13.5px;color:#222;transform:scaleX(0.9323);transform-origin:0 0;">5</div>
<div class="t" style="left:1066.5px;top:306.07px;font-size:13.5px;color:#222;transform:scaleX(0.8259);transform-origin:0 0;">0.2</div>
<div class="t" style="left:1147px;top:306.07px;font-size:13.5px;color:#222;transform:scaleX(0.8288);transform-origin:0 0;">$0.00</div>
<div class="t" style="left:1246px;top:306.07px;font-size:13.5px;color:#222;transform:scaleX(0.8584);transform-origin:0 0;">$0.00</div>
<div class="t" style="left:1356px;top:306.07px;font-size:13.5px;color:#222;transform:scaleX(0.8092);transform-origin:0 0;">Tax</div>
<svg style="left:588px;top:310px" width="9" height="6"><path d="M0 0H9L4.5 6Z" fill="#bdbdbd"/></svg>
<svg style="left:826px;top:310px" width="9" height="6"><path d="M0 0H9L4.5 6Z" fill="#bdbdbd"/></svg>
<svg style="left:891px;top:310px" width="9" height="6"><path d="M0 0H9L4.5 6Z" fill="#bdbdbd"/></svg>
<svg style="left:1385px;top:310px" width="9" height="6"><path d="M0 0H9L4.5 6Z" fill="#bdbdbd"/></svg>
<svg style="left:588px;top:375px" width="9" height="6"><path d="M0 0H9L4.5 6Z" fill="#bdbdbd"/></svg>
<svg style="left:588px;top:404px" width="9" height="6"><path d="M0 0H9L4.5 6Z" fill="#bdbdbd"/></svg>
<svg style="left:588px;top:433px" width="9" height="6"><path d="M0 0H9L4.5 6Z" fill="#bdbdbd"/></svg>
<svg style="left:588px;top:462px" width="9" height="6"><path d="M0 0H9L4.5 6Z" fill="#bdbdbd"/></svg>
<svg style="left:764px;top:305px" width="15" height="14"><path d="M0.5 13.5L1 10.3L9.8 1.5L12.5 4.2L3.7 13Z" fill="#115e9a"/><path d="M10.8 0.5L13.5 3.2" stroke="#115e9a" stroke-width="1.5"/></svg>
<svg style="left:980px;top:303px" width="5" height="18"><rect y="0" width="5" height="4" fill="#115e9a"/><rect y="7" width="5" height="4" fill="#115e9a"/><rect y="14" width="5" height="4" fill="#115e9a"/></svg>
<svg style="left:1230px;top:303px" width="5" height="18"><rect y="0" width="5" height="4" fill="#115e9a"/><rect y="7" width="5" height="4" fill="#115e9a"/><rect y="14" width="5" height="4" fill="#115e9a"/></svg>
<svg style="left:1124px;top:305px" width="15" height="15"><circle cx="7.5" cy="7.5" r="7.3" fill="#f2910f"/><rect x="6.6" y="3" width="1.9" height="6" fill="#fff"/><circle cx="7.55" cy="11.4" r="1.1" fill="#fff"/></svg>
<svg style="left:1208px;top:305px" width="15" height="15"><circle cx="7.5" cy="7.5" r="7.3" fill="#f2910f"/><rect x="6.6" y="3" width="1.9" height="6" fill="#fff"/><circle cx="7.55" cy="11.4" r="1.1" fill="#fff"/></svg>
<div class="a" style="left:1187px;top:303px;width:18px;height:18px;background:#115e9a;border-radius:2px"></div>
<div class="t" style="left:1188.5px;top:306.00px;font-size:13px;color:#fff;transform:scaleX(0.9433);transform-origin:0 0;">LA</div>
<div class="t" style="left:1417.5px;top:306.23px;font-size:14.5px;color:#115e9a;font-weight:bold;transform:scaleX(0.8398);transform-origin:0 0;">Edit</div>
<svg style="left:1462px;top:301px" width="22" height="22"><circle cx="11" cy="11" r="11" fill="#fff"/><circle cx="11" cy="11" r="9.8" fill="#3aa648"/><path d="M6 11.2L9.6 14.6L16 8" fill="none" stroke="#fff" stroke-width="2.4"/></svg>
<div class="t" style="left:1502.5px;top:305.57px;font-size:13.5px;color:#2b8ce0;transform:scaleX(0.8372);transform-origin:0 0;">Ready to Ship</div>
<div class="t" style="left:921.5px;top:338.42px;font-size:12.5px;color:#1a64a0;transform:scaleX(0.9207);transform-origin:0 0;">Discount: -40.00% Original Price: $0.00</div>
<div class="t" style="left:1653.5px;top:169.57px;font-size:13.5px;color:#333;transform:scaleX(0.8108);transform-origin:0 0;">THIS ORDER</div>
<div class="t" style="left:1749px;top:169.57px;font-size:13.5px;color:#333;transform:scaleX(0.8051);transform-origin:0 0;">CUSTOMER</div>
<div class="t" style="left:1858.5px;top:169.57px;font-size:13.5px;color:#333;transform:scaleX(0.7730);transform-origin:0 0;">LOGS</div>
<div class="a" style="left:1641px;top:195px;width:264px;height:1px;background:#e8e8e8;"></div>
<div class="a" style="left:1734px;top:194px;width:92px;height:2px;background:#0b5e9a;"></div>
<div class="t" style="left:1657.5px;top:206.57px;font-size:13.5px;color:#222;transform:scaleX(0.8726);transform-origin:0 0;">SUMMARY</div>
<div class="t" style="left:1657.5px;top:235.84px;font-size:12px;color:#666;transform:scaleX(0.9373);transform-origin:0 0;">Credit Limit:</div>
<div class="t" style="right:17px;top:235.42px;font-size:12.5px;color:#222;transform:scaleX(0.8631);transform-origin:100% 0;">$70,000.00</div>
<div class="t" style="left:1657.5px;top:250.84px;font-size:12px;color:#666;transform:scaleX(0.9408);transform-origin:0 0;">Available Credit:</div>
<div class="t" style="right:17px;top:250.42px;font-size:12.5px;color:#222;transform:scaleX(0.8822);transform-origin:100% 0;">$-132,436.74</div>
<div class="t" style="left:1657.5px;top:265.84px;font-size:12px;color:#666;transform:scaleX(0.9370);transform-origin:0 0;">Open Invoices:</div>
<div class="t" style="right:17px;top:265.42px;font-size:12.5px;color:#222;transform:scaleX(0.8551);transform-origin:100% 0;">$95,248.05</div>
<div class="t" style="left:1657.5px;top:280.84px;font-size:12px;color:#666;transform:scaleX(0.9620);transform-origin:0 0;">Credit:</div>
<div class="t" style="right:17px;top:280.42px;font-size:12.5px;color:#222;transform:scaleX(0.8867);transform-origin:100% 0;">$-6,559.58</div>
<div class="t" style="left:1657.5px;top:295.84px;font-size:12px;color:#666;transform:scaleX(0.9396);transform-origin:0 0;">Deposits:</div>
<div class="t" style="right:17px;top:295.42px;font-size:12.5px;color:#222;transform:scaleX(0.8551);transform-origin:100% 0;">$13,284.03</div>
<div class="t" style="left:1657.5px;top:310.84px;font-size:12px;color:#666;transform:scaleX(0.9195);transform-origin:0 0;">Open Balance:</div>
<div class="t" style="right:17px;top:310.42px;font-size:12.5px;color:#222;transform:scaleX(0.8559);transform-origin:100% 0;">$104,560.77</div>
<div class="t" style="left:1657.5px;top:325.84px;font-size:12px;color:#666;transform:scaleX(0.9245);transform-origin:0 0;">Open Sale Orders:</div>
<div class="t" style="right:17px;top:325.42px;font-size:12.5px;color:#222;transform:scaleX(0.8391);transform-origin:100% 0;">181</div>
<div class="t" style="left:1657.5px;top:340.84px;font-size:12px;color:#666;transform:scaleX(0.9202);transform-origin:0 0;">Phone:</div>
<div class="t" style="right:17px;top:340.42px;font-size:12.5px;color:#222;transform:scaleX(0.8630);transform-origin:100% 0;">430574389656</div>
<div class="t" style="left:1657.5px;top:355.84px;font-size:12px;color:#666;transform:scaleX(0.8698);transform-origin:0 0;">Email:</div>
<div class="t" style="left:1657.5px;top:370.84px;font-size:12px;color:#666;transform:scaleX(0.9583);transform-origin:0 0;">Card on file:</div>
<div class="t" style="right:17px;top:370.57px;font-size:13.5px;color:#222;transform:scaleX(0.8477);transform-origin:100% 0;">Master Card **5454</div>
<div class="a" style="left:1641px;top:393px;width:264px;height:2px;background:#ececec;"></div>
<div class="t" style="left:1657.5px;top:404.15px;font-size:14px;color:#222;transform:scaleX(0.8556);transform-origin:0 0;">RECENT TRANSACTION</div>
<div class="t" style="left:1658px;top:440.57px;font-size:13.5px;color:#222;font-weight:bold;transform:scaleX(0.8640);transform-origin:0 0;">Sale Order</div>
<svg style="left:1872px;top:441px" width="7" height="12"><path d="M0.8 0.8L6 6L0.8 11.2" fill="none" stroke="#888" stroke-width="1.3"/></svg>
<div class="a" style="left:1657px;top:463px;width:231px;height:1px;background:#eeeeee;"></div>
<svg style="left:1872px;top:472px" width="7" height="12"><path d="M0.8 0.8L6 6L0.8 11.2" fill="none" stroke="#888" stroke-width="1.3"/></svg>
<div class="a" style="left:1657px;top:494px;width:231px;height:1px;background:#eeeeee;"></div>
<svg style="left:1872px;top:503px" width="7" height="12"><path d="M0.8 0.8L6 6L0.8 11.2" fill="none" stroke="#888" stroke-width="1.3"/></svg>
<div class="a" style="left:1657px;top:525px;width:231px;height:1px;background:#eeeeee;"></div>
<svg style="left:1872px;top:534px" width="7" height="12"><path d="M0.8 0.8L6 6L0.8 11.2" fill="none" stroke="#888" stroke-width="1.3"/></svg>
<div class="a" style="left:1657px;top:556px;width:231px;height:1px;background:#eeeeee;"></div>
<svg style="left:1872px;top:565px" width="7" height="12"><path d="M0.8 0.8L6 6L0.8 11.2" fill="none" stroke="#888" stroke-width="1.3"/></svg>
<div class="a" style="left:1657px;top:587px;width:231px;height:1px;background:#eeeeee;"></div>
<div class="a" style="left:1641px;top:592px;width:264px;height:1px;background:#e4e4e4;"></div>
<div class="t" style="left:1843.5px;top:626.42px;font-size:12.5px;color:#222;transform:scaleX(0.8551);transform-origin:0 0;">$94,692.60</div>
<div class="t" style="left:1843.5px;top:645.42px;font-size:12.5px;color:#222;transform:scaleX(0.8559);transform-origin:0 0;">$132,436.74</div>
<div class="t" style="left:1843.5px;top:660.42px;font-size:12.5px;color:#222;transform:scaleX(0.8559);transform-origin:0 0;">$289,154.71</div>
<div class="t" style="left:1843.5px;top:675.42px;font-size:12.5px;color:#222;transform:scaleX(0.8551);transform-origin:0 0;">$95,248.05</div>
<div class="t" style="left:1843.5px;top:689.92px;font-size:12.5px;color:#222;transform:scaleX(0.8415);transform-origin:0 0;">$-132,436.74</div>
<div class="a" style="left:1841px;top:753px;width:64px;height:4px;background:#ececec;"></div>
<div class="a" style="left:1842px;top:770px;width:61px;height:26px;background:#eeeeee;border-radius:2px"></div>
<div class="t" style="left:1859.5px;top:777.42px;font-size:12.5px;color:#0b5e9a;transform:scaleX(0.8209);transform-origin:0 0;">CRDT</div>
<div class="a" style="left:1841px;top:808px;width:64px;height:1px;background:#e8e8e8;"></div>
<div class="t" style="left:1896.5px;top:833.92px;font-size:12.5px;color:#222;transform:scaleX(0.8633);transform-origin:0 0;">0.</div>
<div class="t" style="left:1886.5px;top:848.42px;font-size:12.5px;color:#222;transform:scaleX(0.9113);transform-origin:0 0;">10 I</div>
<div class="a" style="left:1841px;top:870px;width:64px;height:1px;background:#e8e8e8;"></div>
<div class="t" style="left:1884px;top:896.92px;font-size:12.5px;color:#333;transform:scaleX(0.8632);transform-origin:0 0;">$0.0</div>
<div class="t" style="left:1899.5px;top:911.42px;font-size:12.5px;color:#333;transform:scaleX(0.8630);transform-origin:0 0;">$</div>
<div class="t" style="left:1884px;top:925.92px;font-size:12.5px;color:#333;transform:scaleX(0.8632);transform-origin:0 0;">$0.0</div>
<div class="t" style="left:1881px;top:939.15px;font-size:14px;color:#222;font-weight:bold;transform:scaleX(0.8808);transform-origin:0 0;">$0.0</div>
<div class="a" style="left:1841px;top:976px;width:64px;height:1px;background:#e8e8e8;"></div>
<div class="t" style="left:1898px;top:985.65px;font-size:14px;color:#222;font-weight:bold;transform:scaleX(0.8990);transform-origin:0 0;">$</div>
<div class="t" style="left:1881px;top:1000.65px;font-size:14px;color:#222;font-weight:bold;transform:scaleX(0.8808);transform-origin:0 0;">$0.0</div>
<div class="t" style="left:1881px;top:1015.15px;font-size:14px;color:#222;font-weight:bold;transform:scaleX(0.8808);transform-origin:0 0;">$0.0</div>
<div class="a" style="left:296px;top:469px;width:1545px;height:571px;background:#fff;border:1px solid #3c3c3c;border-bottom:none"></div>
<div class="a" style="left:297px;top:470px;width:1543px;height:34px;background:#616161;"></div>
<div class="t" style="left:313.5px;top:480.30px;font-size:15px;color:#e6e6e6;transform:scaleX(0.9362);transform-origin:0 0;">Item: 011</div>
<div class="a" style="left:1693px;top:487px;width:11px;height:1px;background:#cccccc;"></div>
<svg style="left:1750px;top:482px" width="11" height="11"><rect x="0.6" y="0.6" width="9.8" height="9.8" fill="none" stroke="#d0d0d0" stroke-width="1.2"/></svg>
<svg style="left:1807px;top:482px" width="11" height="11"><path d="M0.5 0.5L10.5 10.5M10.5 0.5L0.5 10.5" stroke="#e8e8e8" stroke-width="1.2"/></svg>
<div class="a" style="left:297px;top:504px;width:160px;height:536px;background:#e6e6e6;"></div>
<div class="a" style="left:297px;top:580px;width:160px;height:38px;background:#fff;"></div>
<div class="a" style="left:455px;top:580px;width:2px;height:38px;background:#0b5e9a;"></div>
<div class="t" style="left:324.8px;top:517.57px;font-size:13.5px;color:#115e9a;transform:scaleX(0.8224);transform-origin:0 0;">General</div>
<svg style="left:304px;top:518px" width="10" height="10"><path d="M5 0.8L9.2 5L5 9.2L0.8 5Z" fill="none" stroke="#6aa5cd" stroke-width="1.2"/></svg>
<div class="t" style="left:324.8px;top:555.57px;font-size:13.5px;color:#115e9a;transform:scaleX(0.8906);transform-origin:0 0;">Pricing &amp; UOM</div>
<svg style="left:305px;top:557px" width="9" height="9"><circle cx="4.5" cy="4.5" r="3.6" fill="none" stroke="#6aa5cd" stroke-width="1.3"/></svg>
<div class="t" style="left:324.8px;top:593.57px;font-size:13.5px;color:#222;transform:scaleX(0.9032);transform-origin:0 0;">Additional Settings</div>
<svg style="left:305px;top:595px" width="9" height="9"><circle cx="4.5" cy="4.5" r="3.6" fill="none" stroke="#8a8a8a" stroke-width="1.3"/></svg>
<div class="t" style="left:324.8px;top:631.57px;font-size:13.5px;color:#115e9a;transform:scaleX(0.8942);transform-origin:0 0;">Item variations</div>
<svg style="left:305px;top:633px" width="9" height="9"><circle cx="4.5" cy="4.5" r="3.6" fill="none" stroke="#6aa5cd" stroke-width="1.3"/></svg>
<div class="t" style="left:324.8px;top:669.57px;font-size:13.5px;color:#115e9a;transform:scaleX(0.8644);transform-origin:0 0;">Packaging</div>
<svg style="left:305px;top:671px" width="9" height="9"><circle cx="4.5" cy="4.5" r="3.6" fill="none" stroke="#6aa5cd" stroke-width="1.3"/></svg>
<div class="t" style="left:324.8px;top:707.57px;font-size:13.5px;color:#115e9a;transform:scaleX(0.8862);transform-origin:0 0;">Dimensions</div>
<svg style="left:305px;top:709px" width="9" height="9"><circle cx="4.5" cy="4.5" r="3.6" fill="none" stroke="#6aa5cd" stroke-width="1.3"/></svg>
<div class="t" style="left:324.8px;top:745.57px;font-size:13.5px;color:#115e9a;transform:scaleX(0.8602);transform-origin:0 0;">Related items</div>
<svg style="left:305px;top:747px" width="10" height="8"><path d="M2 1.5H9.5M0.5 7H7.5" stroke="#6aa5cd" stroke-width="1.4"/></svg>
<div class="t" style="left:324.8px;top:782.57px;font-size:13.5px;color:#115e9a;transform:scaleX(0.8933);transform-origin:0 0;">Substituted items</div>
<svg style="left:305px;top:784px" width="10" height="8"><path d="M2 1.5H9.5M0.5 7H7.5" stroke="#6aa5cd" stroke-width="1.4"/></svg>
<div class="t" style="left:324.8px;top:820.57px;font-size:13.5px;color:#115e9a;transform:scaleX(0.8416);transform-origin:0 0;">Barcodes</div>
<svg style="left:305px;top:822px" width="9" height="9"><circle cx="4.5" cy="4.5" r="3.6" fill="none" stroke="#6aa5cd" stroke-width="1.3"/></svg>
<div class="t" style="left:324.8px;top:858.57px;font-size:13.5px;color:#115e9a;transform:scaleX(0.8680);transform-origin:0 0;">Vendors</div>
<svg style="left:305px;top:860px" width="9" height="9"><circle cx="4.5" cy="4.5" r="3.6" fill="none" stroke="#6aa5cd" stroke-width="1.3"/></svg>
<div class="t" style="left:324.8px;top:896.57px;font-size:13.5px;color:#115e9a;transform:scaleX(0.8580);transform-origin:0 0;">Customers</div>
<svg style="left:305px;top:898px" width="9" height="9"><circle cx="4.5" cy="4.5" r="3.6" fill="none" stroke="#6aa5cd" stroke-width="1.3"/></svg>
<div class="t" style="left:324.8px;top:934.57px;font-size:13.5px;color:#115e9a;transform:scaleX(0.8918);transform-origin:0 0;">Workorders</div>
<svg style="left:305px;top:936px" width="10" height="8"><path d="M2 1.5H9.5M0.5 7H7.5" stroke="#6aa5cd" stroke-width="1.4"/></svg>
<div class="t" style="left:324.8px;top:972.57px;font-size:13.5px;color:#115e9a;transform:scaleX(0.8458);transform-origin:0 0;">Stores</div>
<svg style="left:305px;top:974px" width="9" height="9"><circle cx="4.5" cy="4.5" r="3.6" fill="none" stroke="#6aa5cd" stroke-width="1.3"/></svg>
<div class="t" style="left:324.8px;top:1010.57px;font-size:13.5px;color:#115e9a;transform:scaleX(0.8096);transform-origin:0 0;">Expenses</div>
<svg style="left:305px;top:1012px" width="9" height="9"><circle cx="4.5" cy="4.5" r="3.6" fill="none" stroke="#6aa5cd" stroke-width="1.3"/></svg>
<div class="a" style="left:457px;top:541px;width:1382px;height:2px;background:#efefef;"></div>
<div class="a" style="left:1543px;top:511px;width:117px;height:25px;background:#0b5e9a;border-radius:2px"></div>
<div class="a" style="left:1662px;top:511px;width:22px;height:25px;background:#0b5e9a;border-radius:2px"></div>
<div class="a" style="left:1694px;top:511px;width:115px;height:25px;background:#0b5e9a;border-radius:2px"></div>
<div class="a" style="left:1810px;top:511px;width:22px;height:25px;background:#0b5e9a;border-radius:2px"></div>
<div class="t" style="left:1558.5px;top:517.92px;font-size:12.5px;color:#fff;transform:scaleX(0.8418);transform-origin:0 0;">CREATE NEW PO</div>
<div class="t" style="left:1709px;top:517.92px;font-size:12.5px;color:#fff;transform:scaleX(0.8509);transform-origin:0 0;">ITEM OVERVIEW</div>
<svg style="left:1669px;top:521px" width="8" height="5"><path d="M0 0H8L4.0 5Z" fill="#fff"/></svg>
<svg style="left:1817px;top:521px" width="8" height="5"><path d="M0 0H8L4.0 5Z" fill="#fff"/></svg>
<div class="t" style="left:465px;top:556.07px;font-size:13.5px;color:#222;transform:scaleX(0.9125);transform-origin:0 0;">ADDITIONAL SETTINGS</div>
<div class="a" style="left:466px;top:582.5px;width:23px;height:9px;background:#e6e6e6;border-radius:5px"></div>
<div class="a" style="left:465px;top:581px;width:12px;height:12px;background:#bdbdbd;border-radius:50%"></div>
<div class="t" style="left:499px;top:579.57px;font-size:13.5px;color:#222;transform:scaleX(0.8636);transform-origin:0 0;">Don&#x27;t show on POS Categories</div>
<div class="a" style="left:466px;top:607.5px;width:23px;height:9px;background:#e6e6e6;border-radius:5px"></div>
<div class="a" style="left:465px;top:606px;width:12px;height:12px;background:#bdbdbd;border-radius:50%"></div>
<div class="t" style="left:499px;top:604.57px;font-size:13.5px;color:#222;transform:scaleX(0.9050);transform-origin:0 0;">Don&#x27;t show on App</div>
<div class="a" style="left:466px;top:632.5px;width:23px;height:9px;background:#e6e6e6;border-radius:5px"></div>
<div class="a" style="left:465px;top:631px;width:12px;height:12px;background:#bdbdbd;border-radius:50%"></div>
<div class="t" style="left:499px;top:629.57px;font-size:13.5px;color:#222;transform:scaleX(0.8629);transform-origin:0 0;">Always Make new item on POS</div>
<div class="a" style="left:466px;top:657.5px;width:23px;height:9px;background:#e6e6e6;border-radius:5px"></div>
<div class="a" style="left:465px;top:656px;width:12px;height:12px;background:#bdbdbd;border-radius:50%"></div>
<div class="t" style="left:499px;top:654.57px;font-size:13.5px;color:#222;transform:scaleX(0.8916);transform-origin:0 0;">Require not Anonymous Customer</div>
<div class="a" style="left:467px;top:683px;width:22px;height:8px;background:#c8d8fa;border-radius:4px"></div>
<div class="a" style="left:479px;top:681px;width:12px;height:12px;background:#0b5e9a;border-radius:50%"></div>
<div class="t" style="left:499px;top:679.57px;font-size:13.5px;color:#222;transform:scaleX(0.8766);transform-origin:0 0;">Don&#x27;t show on Comparison Screen</div>
<div class="a" style="left:453px;top:672px;width:239px;height:29px;background:transparent;border:4px solid #fb5a49;box-shadow:2px 3px 2px rgba(0,0,0,0.6), inset 2px 2px 2px rgba(0,0,0,0.55)"></div>
<div class="t" style="left:465px;top:728.57px;font-size:13.5px;color:#222;transform:scaleX(0.8592);transform-origin:0 0;">SETTINGS</div>
<div class="t" style="left:465px;top:754.34px;font-size:12px;color:#555;transform:scaleX(0.8495);transform-origin:0 0;">REQUIRE CUSTOMER ACKNOWLEDGEMENT</div>
<div class="a" style="left:465px;top:770px;width:350px;height:25px;background:#f3f3f3;border-radius:3px"></div>
<svg style="left:797px;top:780px" width="10" height="7"><path d="M0 0H10L5.0 7Z" fill="#b8b8b8"/></svg>
<div class="a" style="left:467px;top:809px;width:22px;height:8px;background:#c8d8fa;border-radius:4px"></div>
<div class="a" style="left:479px;top:807px;width:12px;height:12px;background:#0b5e9a;border-radius:50%"></div>
<div class="t" style="left:499px;top:805.57px;font-size:13.5px;color:#222;transform:scaleX(0.8504);transform-origin:0 0;">Trackable Item</div>
<div class="a" style="left:467px;top:834px;width:22px;height:8px;background:#c8d8fa;border-radius:4px"></div>
<div class="a" style="left:479px;top:832px;width:12px;height:12px;background:#0b5e9a;border-radius:50%"></div>
<div class="t" style="left:499px;top:830.57px;font-size:13.5px;color:#222;transform:scaleX(0.8662);transform-origin:0 0;">Orderable</div>
<div class="a" style="left:466px;top:858.5px;width:23px;height:9px;background:#e6e6e6;border-radius:5px"></div>
<div class="a" style="left:465px;top:857px;width:12px;height:12px;background:#bdbdbd;border-radius:50%"></div>
<div class="t" style="left:499px;top:855.57px;font-size:13.5px;color:#222;transform:scaleX(0.8979);transform-origin:0 0;">Do not track item on comparison</div>
<div class="t" style="left:465px;top:881.34px;font-size:12px;color:#555;transform:scaleX(0.8474);transform-origin:0 0;">LEAD TIME</div>
<div class="a" style="left:465px;top:897px;width:350px;height:25px;background:#f3f3f3;border-radius:3px;border:1px solid #ebebeb"></div>
<div class="t" style="left:471px;top:902.50px;font-size:13px;color:#aaa;transform:scaleX(0.8334);transform-origin:0 0;">LEAD TIME</div>
<div class="t" style="left:465px;top:932.84px;font-size:12px;color:#555;transform:scaleX(0.8461);transform-origin:0 0;">MERGE ITEMS IN PO CREATED FROM PO REQUESTS</div>
<div class="a" style="left:465px;top:949px;width:350px;height:25px;background:#f3f3f3;border-radius:3px"></div>
<svg style="left:797px;top:959px" width="10" height="7"><path d="M0 0H10L5.0 7Z" fill="#b8b8b8"/></svg>
<div class="a" style="left:457px;top:1035px;width:1382px;height:1px;background:#ececec;"></div>
<div class="t" style="left:915px;top:555.57px;font-size:13.5px;color:#222;transform:scaleX(0.8444);transform-origin:0 0;">RESTOCKING FEE</div>
<div class="a" style="left:917px;top:583px;width:22px;height:8px;background:#c8d8fa;border-radius:4px"></div>
<div class="a" style="left:929px;top:581px;width:12px;height:12px;background:#0b5e9a;border-radius:50%"></div>
<div class="t" style="left:949px;top:579.57px;font-size:13.5px;color:#222;transform:scaleX(0.8382);transform-origin:0 0;">Enable Restocking Fee</div>
<div class="a" style="left:916px;top:605px;width:208px;height:23px;background:#f3f3f3;border-radius:2px"></div>
<div class="t" style="left:920px;top:610.00px;font-size:13px;color:#222;transform:scaleX(0.8673);transform-origin:0 0;">Value</div>
<svg style="left:1106px;top:615px" width="10" height="6"><path d="M0 0H10L5.0 6Z" fill="#b8b8b8"/></svg>
<div class="a" style="left:1139px;top:604px;width:210px;height:25px;background:#f3f3f3;border-radius:2px;border:1px solid #e8e8e8"></div>
<div class="t" style="left:915px;top:653.57px;font-size:13.5px;color:#222;transform:scaleX(0.9039);transform-origin:0 0;">DUTY &amp; TARIFF</div>
<div class="t" style="left:915px;top:678.84px;font-size:12px;color:#555;transform:scaleX(0.8265);transform-origin:0 0;">DUTY</div>
<div class="a" style="left:915px;top:695px;width:434px;height:25px;background:#f3f3f3;border-radius:2px"></div>
<div class="t" style="left:921px;top:701.00px;font-size:13px;color:#aaa;transform:scaleX(0.9026);transform-origin:0 0;">Select Duty</div>
<svg style="left:1334px;top:705px" width="10" height="6"><path d="M0 0H10L5.0 6Z" fill="#b8b8b8"/></svg>
<div class="t" style="left:915px;top:730.84px;font-size:12px;color:#555;transform:scaleX(0.8272);transform-origin:0 0;">TARIFF</div>
<div class="a" style="left:915px;top:747px;width:434px;height:25px;background:#f3f3f3;border-radius:2px"></div>
<div class="t" style="left:921px;top:753.00px;font-size:13px;color:#aaa;transform:scaleX(0.9183);transform-origin:0 0;">Select tariff</div>
<svg style="left:1334px;top:757px" width="10" height="6"><path d="M0 0H10L5.0 6Z" fill="#b8b8b8"/></svg>
</body></html>
